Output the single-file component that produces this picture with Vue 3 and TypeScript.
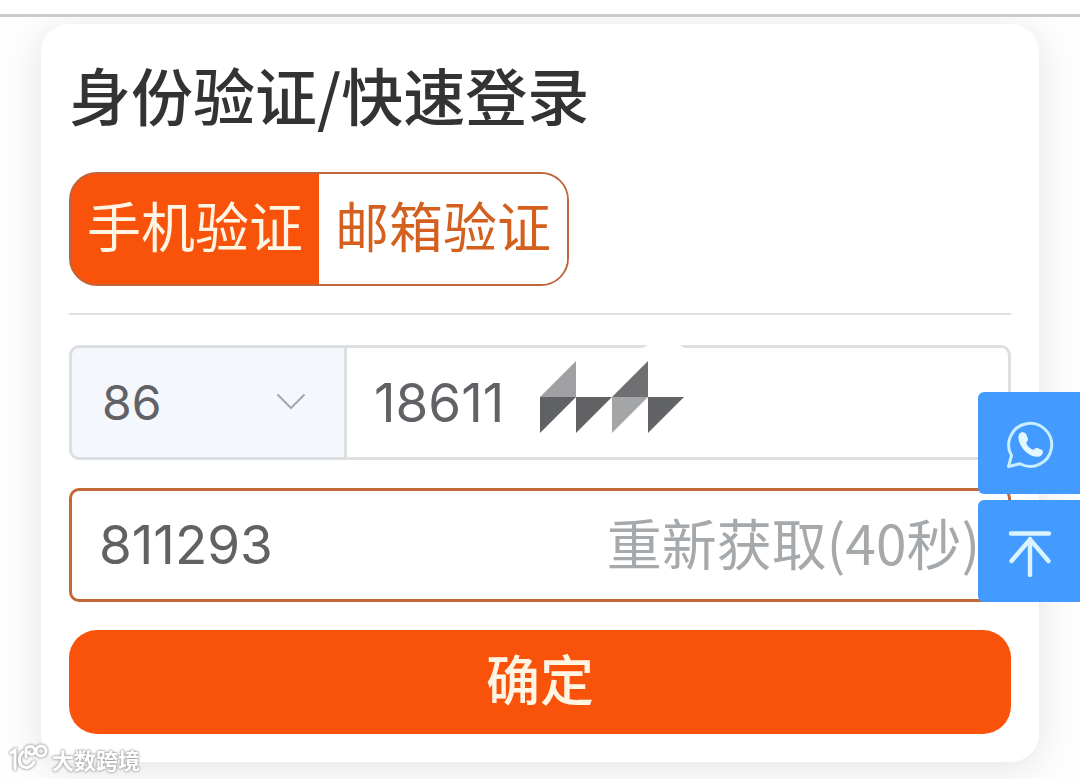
<script setup lang="ts">
import { ref } from 'vue'

type Mode = 'phone' | 'email'

const tabs: { id: Mode; label: string }[] = [
  { id: 'phone', label: '手机验证' },
  { id: 'email', label: '邮箱验证' },
]
const mode = ref<Mode>('phone')
const area = ref('86')
const phone = ref('18611')
const code = ref('811293')
const seconds = ref(40)
</script>

<template>
  <div class="page">
    <header class="topbar"></header>
    <main class="stage">
      <form class="card" @submit.prevent>
        <h1 class="title">身份验证/快速登录</h1>
        <div class="tabs" role="tablist">
          <button
            v-for="t in tabs"
            :key="t.id"
            type="button"
            role="tab"
            class="tab"
            :class="{ active: mode === t.id }"
            :aria-selected="mode === t.id"
            @click="mode = t.id"
          >{{ t.label }}</button>
        </div>
        <hr class="rule" />
        <div class="phone-row">
          <div class="area">
            <select v-model="area" class="area-select" aria-label="区号">
              <option value="86">86</option>
            </select>
            <svg class="chevron" viewBox="0 0 30 18" aria-hidden="true">
              <path d="M1.5 1.5 L15 15 L28.5 1.5" fill="none" stroke="#a6a9ae" stroke-width="2.2" />
            </svg>
          </div>
          <div class="phone">
            <input v-model="phone" class="phone-input" type="tel" aria-label="手机号" />
            <svg class="mask" viewBox="0 0 150 96" aria-hidden="true">
              <path d="M98 6 L110 0 H138 L148 6 Z" fill="#fff" />
              <path d="M0 53 L36 17 V53 Z" fill="#a1a1a3" />
              <path d="M72 53 L108 17 V53 Z" fill="#707073" />
              <path d="M0 53 H36 L0 89 Z" fill="#606165" />
              <path d="M36 53 H72 L36 89 Z" fill="#626264" />
              <path d="M72 53 H108 L72 89 Z" fill="#a3a5a6" />
              <path d="M108 53 H144 L108 89 Z" fill="#626367" />
            </svg>
          </div>
        </div>
        <div class="code-row">
          <input v-model="code" class="code-input" type="text" inputmode="numeric" aria-label="验证码" />
          <button class="resend" type="button" disabled>重新获取({{ seconds }}秒)</button>
        </div>
        <button class="submit" type="submit">确定</button>
      </form>
    </main>

    <aside class="floating">
      <button class="float-btn" type="button" aria-label="WhatsApp">
        <svg viewBox="0 0 48 48" aria-hidden="true">
          <path
            d="M2.5 45.5 L5.5 34.5 A21.5 21.5 0 1 1 14 42.8 Z"
            fill="none" stroke="#c9eeff" stroke-width="3" stroke-linejoin="round"
          />
          <path
            d="M13.5 12.5 C15.5 10.5 19 11 20 13 L22 17.5 C22.5 19.5 20 21 20.3 22.6 C21.5 25.5 24 27.6 26.7 28.7 C28.3 29 29.5 26.4 31.5 26.9 L36 29 C38 30.5 36.5 34 34 35.3 C30 37 24 34.6 19.4 30.4 C14.4 25.6 10.5 17.5 13.5 12.5 Z"
            fill="#e2f7ff"
          />
        </svg>
      </button>
      <button class="float-btn" type="button" aria-label="返回顶部">
        <svg viewBox="0 0 48 48" aria-hidden="true">
          <path
            d="M5 4.5 H43 M24 10 V46 M5.5 32 L24 10.5 L42.5 32"
            fill="none" stroke="#d9f4ff" stroke-width="4.4" stroke-linecap="round" stroke-linejoin="round"
          />
        </svg>
      </button>
    </aside>

    <div class="watermark">
      <svg viewBox="0 0 40 30" aria-hidden="true">
        <g fill="none" stroke="#fff" stroke-width="3" stroke-linecap="round">
          <path d="M2 9 L6 6 V25" />
          <path d="M14 8 C10 11 9 17 12 21 C16 26 23 23 25 18" />
          <path d="M17 13 V5 C17 2 25 1 26 6 C27 11 20 12 20 8" />
          <circle cx="32" cy="7" r="5" />
        </g>
      </svg>
      <span>大数跨境</span>
    </div>
  </div>
</template>

<style>
body {
  background: #fefefe;
}
</style>

<style scoped>
.page,
.page * {
  box-sizing: border-box;
}
.page {
  min-height: 100vh;
  display: flex;
  flex-direction: column;
  overflow: hidden;
  font-family: "Noto Sans CJK SC", sans-serif;
}
button,
input,
select {
  font-family: inherit;
  margin: 0;
}
.topbar {
  height: 17px;
  flex: none;
  background: #fff;
  border-bottom: 3px solid #cbcbcb;
}
.stage {
  flex: 1;
  padding: 7px 41px 17px;
  overflow: hidden;
}
.card {
  padding: 28px;
  background: #fff;
  border-radius: 28px;
  box-shadow: 0 6px 40px rgba(0, 0, 0, 0.11);
  display: flex;
  flex-direction: column;
}
.title {
  margin: 0 0 36px;
  font-size: 62px;
  line-height: 84px;
  font-weight: 500;
  color: #333;
}
.tabs {
  align-self: flex-start;
  display: flex;
  height: 114px;
  border: 2px solid #c0643c;
  border-radius: 28px;
  background: linear-gradient(90deg, #f9530b 50%, #fff 50%);
  overflow: hidden;
}
.tab {
  border: 0;
  padding: 0 16px 8px;
  background: #fff;
  color: #d3601f;
  font-size: 54px;
  line-height: 80px;
}
.tab.active {
  background: #f9530b;
  color: #fff5e4;
}
.rule {
  width: 100%;
  margin: 27px 0 30px;
  border: 0;
  border-top: 2px solid #dedfe1;
}
.phone-row {
  display: flex;
  height: 115px;
  margin-bottom: 28px;
}
.area {
  position: relative;
  flex: 0 0 278px;
}
.area-select {
  appearance: none;
  width: 100%;
  height: 100%;
  padding: 0 30px;
  border: 3px solid #dcdfe2;
  border-radius: 10px 0 0 10px;
  background: #f4f7fc;
  color: #606266;
  font-family: Inter, sans-serif;
  font-size: 48px;
}
.chevron {
  position: absolute;
  right: 41px;
  top: 48px;
  width: 30px;
  height: 18px;
  pointer-events: none;
}
.phone {
  position: relative;
  flex: 1;
}
.phone-input {
  width: 100%;
  height: 100%;
  padding: 0 27px;
  border: 3px solid #dedfe1;
  border-left: 0;
  border-radius: 0 10px 10px 0;
  background: #fff;
  color: #606266;
  font-family: Inter, sans-serif;
  font-size: 53px;
}
.mask {
  position: absolute;
  left: 193px;
  top: -1px;
  width: 150px;
  height: 96px;
}
.code-row {
  display: flex;
  height: 114px;
  margin-bottom: 28px;
  border: 3px solid #c4683a;
  border-radius: 10px;
  background: #fff;
}
.code-input {
  flex: 1;
  min-width: 0;
  padding: 0 0 0 27px;
  border: 0;
  outline: 0;
  background: transparent;
  color: #606264;
  font-family: Inter, sans-serif;
  font-size: 53px;
}
.resend {
  border: 0;
  padding: 0 28px 8px 0;
  background: transparent;
  color: #a6a9ab;
  font-size: 55px;
  line-height: 80px;
  white-space: nowrap;
}
.submit {
  height: 104px;
  border: 0;
  border-radius: 28px;
  padding: 0 0 8px;
  background: #f9530b;
  color: #fff5e4;
  font-size: 54px;
  line-height: 80px;
  font-weight: 500;
}
.floating {
  position: fixed;
  right: 0;
  top: 392px;
  display: flex;
  flex-direction: column;
  gap: 6px;
}
.float-btn {
  display: flex;
  align-items: center;
  justify-content: center;
  width: 102px;
  height: 102px;
  padding: 4px 0 0 2px;
  border: 0;
  border-radius: 6px 0 0 6px;
  background: #439bff;
}
.float-btn svg {
  width: 48px;
  height: 48px;
}
.watermark {
  position: fixed;
  left: 9px;
  bottom: 5px;
  display: flex;
  align-items: center;
  gap: 3px;
  color: #fff;
  font-size: 22px;
  line-height: 30px;
  font-weight: 700;
  filter: drop-shadow(0 0 1px #999) drop-shadow(0 0 1px #bbb);
}
.watermark svg {
  width: 40px;
  height: 30px;
}
</style>
